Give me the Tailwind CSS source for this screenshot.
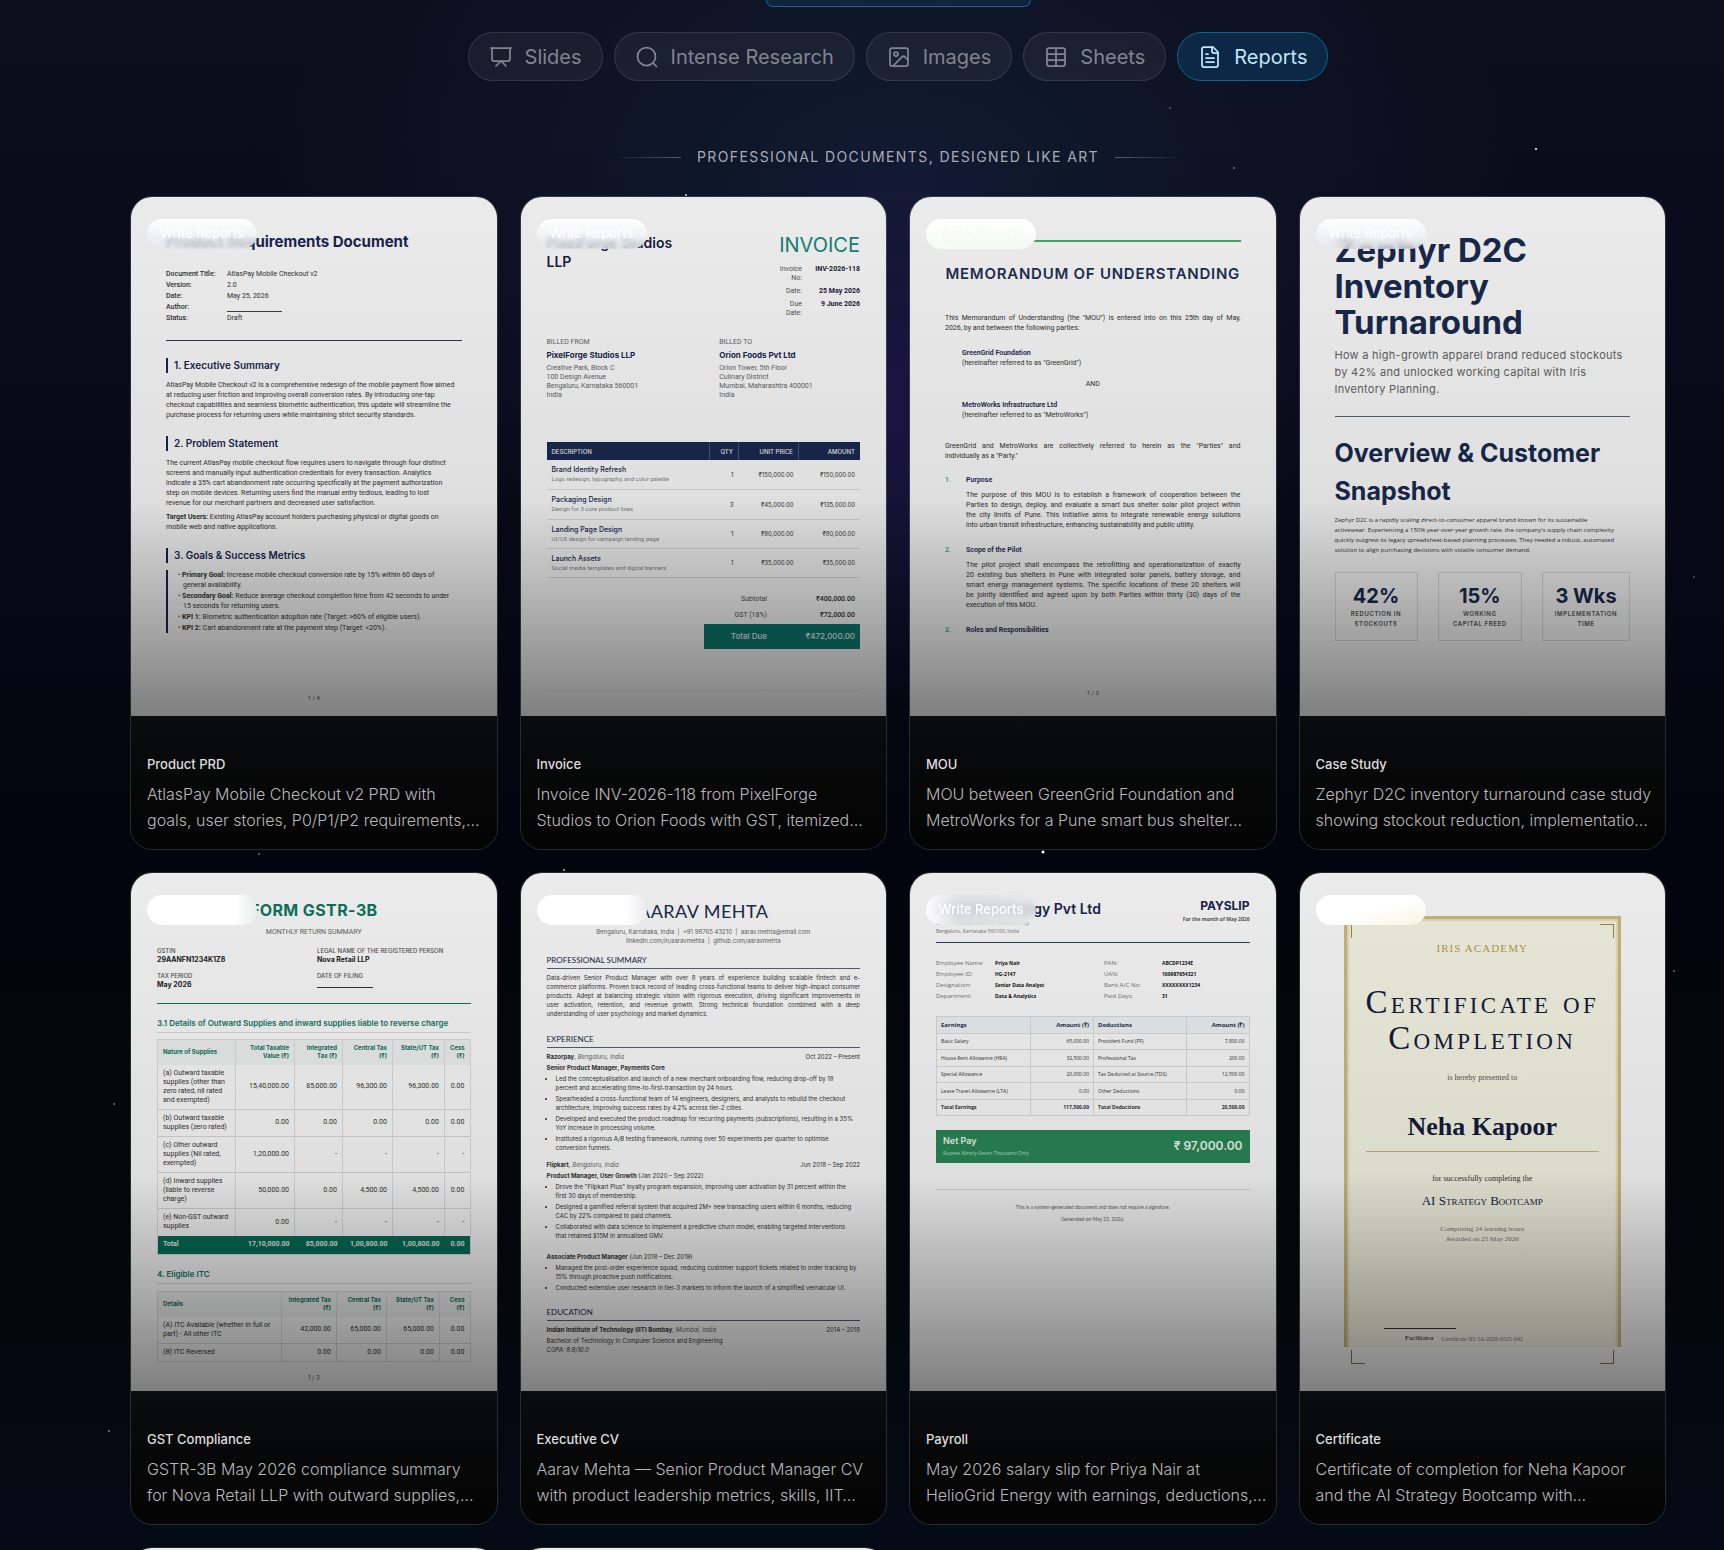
<!DOCTYPE html>
<html lang="en">
<head>
    <meta charset="UTF-8">
    <meta name="viewport" content="width=device-width, initial-scale=1.0">
    <title>Reports</title>
    <script src="https://cdn.jsdelivr.net/npm/@tailwindcss/browser@4"></script>
</head>
<body class="bg-[#04060d] font-['Inter',sans-serif] text-white">
<div class="relative h-screen overflow-y-auto overflow-x-hidden pl-[72px] [scrollbar-width:none] bg-[radial-gradient(ellipse_200px_300px_at_52%_26%,#1c1440_0%,transparent_100%),radial-gradient(ellipse_620px_420px_at_52%_12%,#101b30_0%,transparent_100%),linear-gradient(180deg,#0d0e1d_0%,#0a0b1a_22%,#03050e_52%,#03060c_80%,#050b15_100%)]">

    <!-- Estrellas -->
    <svg class="pointer-events-none absolute inset-0 h-full w-full" fill="#fff" aria-hidden="true">
        <circle cx="1536" cy="149" r="1" />
        <circle cx="1170" cy="108" r="1" opacity=".3" />
        <circle cx="1234" cy="168" r="1" opacity=".4" />
        <circle cx="686" cy="195" r="1" opacity=".8" />
        <circle cx="1043" cy="852" r="1.5" />
        <circle cx="259" cy="854" r="1" opacity=".4" />
        <circle cx="564" cy="870" r="1" opacity=".7" />
        <circle cx="1694" cy="577" r="1" opacity=".3" />
        <circle cx="1674" cy="971" r="1" opacity=".4" />
        <circle cx="114" cy="1104" r="1" opacity=".4" />
        <circle cx="109" cy="1431" r="1" opacity=".5" />
    </svg>

    <header class="relative flex flex-col items-center">
        <div class="h-[7px] w-[265px] rounded-b-2xl border border-t-0 border-[#0d6a94] bg-[#10243f]"></div>

        <nav class="mt-[25px] flex gap-[11px] text-[20px] text-[#82848f]">
            <button class="flex h-[49px] items-center gap-3 rounded-full border border-white/10 bg-white/5 px-5">
                <svg class="size-6" viewBox="0 0 24 24" fill="none" stroke="currentColor" stroke-width="1.75" stroke-linecap="round" stroke-linejoin="round"><path d="M2 3h20"/><path d="M21 3v11a2 2 0 0 1-2 2H5a2 2 0 0 1-2-2V3"/><path d="m7 21 5-5 5 5"/></svg>
                Slides
            </button>
            <button class="flex h-[49px] items-center gap-3 rounded-full border border-white/10 bg-white/5 px-5">
                <svg class="size-6" viewBox="0 0 24 24" fill="none" stroke="currentColor" stroke-width="1.75" stroke-linecap="round" stroke-linejoin="round"><circle cx="11.5" cy="11.5" r="9"/><path d="m21.5 21.5-3.6-3.6"/></svg>
                Intense Research
            </button>
            <button class="flex h-[49px] items-center gap-3 rounded-full border border-white/10 bg-white/5 px-5">
                <svg class="size-6" viewBox="0 0 24 24" fill="none" stroke="currentColor" stroke-width="1.75" stroke-linecap="round" stroke-linejoin="round"><rect width="18" height="18" x="3" y="3" rx="2"/><circle cx="9" cy="9" r="2"/><path d="m21 15-3.086-3.086a2 2 0 0 0-2.828 0L6 21"/></svg>
                Images
            </button>
            <button class="flex h-[49px] items-center gap-3 rounded-full border border-white/10 bg-white/5 px-5">
                <svg class="size-6" viewBox="0 0 24 24" fill="none" stroke="currentColor" stroke-width="1.75" stroke-linecap="round" stroke-linejoin="round"><rect width="18" height="18" x="3" y="3" rx="2"/><path d="M12 3v18"/><path d="M3 9h18"/><path d="M3 15h18"/></svg>
                Sheets
            </button>
            <button class="flex h-[49px] items-center gap-3 rounded-full border border-[#0b6590] bg-[#0d2844] px-5 text-[#bfe6fb]">
                <svg class="size-6" viewBox="0 0 24 24" fill="none" stroke="currentColor" stroke-width="1.75" stroke-linecap="round" stroke-linejoin="round"><path d="M15 2H6a2 2 0 0 0-2 2v16a2 2 0 0 0 2 2h12a2 2 0 0 0 2-2V7Z"/><path d="M14 2v4a2 2 0 0 0 2 2h4"/><path d="M10 9H8"/><path d="M16 13H8"/><path d="M16 17H8"/></svg>
                Reports
            </button>
        </nav>

        <div class="mt-[66px] flex items-center gap-4">
            <span class="h-px w-[70px] bg-linear-to-l from-white/30 to-transparent"></span>
            <h2 class="text-[14px] leading-5 tracking-widest text-[#a9acb6]">PROFESSIONAL DOCUMENTS, DESIGNED LIKE ART</h2>
            <span class="h-px w-[70px] bg-linear-to-r from-white/30 to-transparent"></span>
        </div>
    </header>

    <main class="relative mx-auto mt-[29px] grid max-w-[1536px] grid-cols-4 gap-[22px]">

        <!-- PRD -->
        <article class="overflow-hidden rounded-[22px] border border-white/15">
            <div class="relative aspect-[365/518] overflow-hidden bg-white text-[#333]">
                <div class="flex h-full flex-col px-[35px] pt-[35px] pb-[13px] font-['Roboto',sans-serif] text-[7px] leading-[10px] whitespace-nowrap">
                    <h3 class="font-['Inter',sans-serif] text-[15px] leading-5 font-bold text-[#1b2550]">Product Requirements Document</h3>
                    <dl class="mt-[17px] grid grid-cols-[61px_1fr] leading-[11px]">
                        <dt class="font-medium">Document Title:</dt><dd>AtlasPay Mobile Checkout v2</dd>
                        <dt class="font-medium">Version:</dt><dd>2.0</dd>
                        <dt class="font-medium">Date:</dt><dd>May 25, 2026</dd>
                        <dt class="font-medium">Author:</dt><dd class="flex items-end"><span class="mb-px w-[55px] border-b border-[#444]"></span></dd>
                        <dt class="font-medium">Status:</dt><dd>Draft</dd>
                    </dl>
                    <hr class="mt-4 border-[#33364d]">
                    <h4 class="mt-[17px] border-l-2 border-[#1b2550] pl-1.5 font-['Inter',sans-serif] text-[10px] leading-[15px] font-semibold text-[#1b2550]">1. Executive Summary</h4>
                    <p class="mt-[7px]">AtlasPay Mobile Checkout v2 is a comprehensive redesign of the mobile payment flow aimed<br>at reducing user friction and improving overall conversion rates. By introducing one-tap<br>checkout capabilities and seamless biometric authentication, this update will streamline the<br>purchase process for returning users while maintaining strict security standards.</p>
                    <h4 class="mt-4 border-l-2 border-[#1b2550] pl-1.5 font-['Inter',sans-serif] text-[10px] leading-[15px] font-semibold text-[#1b2550]">2. Problem Statement</h4>
                    <p class="mt-[7px]">The current AtlasPay mobile checkout flow requires users to navigate through four distinct<br>screens and manually input authentication credentials for every transaction. Analytics<br>indicate a 35% cart abandonment rate occurring specifically at the payment authorization<br>step on mobile devices. Returning users find the manual entry tedious, leading to lost<br>revenue for our merchant partners and decreased user satisfaction.</p>
                    <p class="mt-1"><b>Target Users:</b> Existing AtlasPay account holders purchasing physical or digital goods on<br>mobile web and native applications.</p>
                    <h4 class="mt-4 border-l-2 border-[#1b2550] pl-1.5 font-['Inter',sans-serif] text-[10px] leading-[15px] font-semibold text-[#1b2550]">3. Goals &amp; Success Metrics</h4>
                    <ul class="mt-[7px] flex flex-col gap-px border-l-2 border-[#1b2550] pl-[15px]">
                        <li class="-indent-[5px]">• <b>Primary Goal:</b> Increase mobile checkout conversion rate by 15% within 60 days of<br>general availability.</li>
                        <li class="-indent-[5px]">• <b>Secondary Goal:</b> Reduce average checkout completion time from 42 seconds to under<br>15 seconds for returning users.</li>
                        <li class="-indent-[5px]">• <b>KPI 1:</b> Biometric authentication adoption rate (Target: &gt;60% of eligible users).</li>
                        <li class="-indent-[5px]">• <b>KPI 2:</b> Cart abandonment rate at the payment step (Target: &lt;20%).</li>
                    </ul>
                    <p class="mt-auto text-center text-[6px] text-[#555]">1 / 4</p>
                </div>
                <div class="absolute inset-0 bg-[linear-gradient(180deg,#00000014_0%,#00000020_58%,#00000080_100%)]"></div>
                <span class="absolute top-[22px] left-4 flex h-[30px] w-[110px] items-center justify-center rounded-full bg-linear-to-b from-white to-[#e4e6ec]/70 text-[13px] text-white backdrop-blur-[2px]">Write Reports</span>
            </div>
            <div class="bg-linear-to-b from-[#0b0c0e] to-[#040404] px-4 pt-[38px] pb-4">
                <h3 class="text-[13px] leading-5 font-medium text-[#dededf]">Product PRD</h3>
                <p class="mt-[7px] text-[16px] leading-[26px] font-light whitespace-nowrap text-[#b9b9ba]">AtlasPay Mobile Checkout v2 PRD with<br>goals, user stories, P0/P1/P2 requirements,…</p>
            </div>
        </article>

        <!-- Invoice -->
        <article class="overflow-hidden rounded-[22px] border border-white/15">
            <div class="relative aspect-[365/518] overflow-hidden bg-white text-[#333]">
                <div class="flex h-full flex-col px-[26px] pt-9 text-[6px] leading-[9px] whitespace-nowrap">
                    <div class="flex justify-between">
                        <h3 class="text-[14px] leading-[19px] font-semibold text-[#1a2140]">PixelForge Studios<br>LLP</h3>
                        <div class="flex flex-col items-end">
                            <p class="text-[20px] leading-6 text-[#16897a]">INVOICE</p>
                            <dl class="mt-2 grid grid-cols-[auto_58px] gap-y-1 text-right font-['Roboto',sans-serif] text-[7px]">
                                <dt class="text-[#555]">Invoice<br>No:</dt><dd class="font-bold text-[#1a2140]">INV-2026-118</dd>
                                <dt class="text-[#555]">Date:</dt><dd class="font-bold text-[#1a2140]">25 May 2026</dd>
                                <dt class="text-[#555]">Due<br>Date:</dt><dd class="font-bold text-[#1a2140]">9 June 2026</dd>
                            </dl>
                        </div>
                    </div>
                    <div class="mt-5 grid grid-cols-2 gap-8 font-['Roboto',sans-serif] text-[7px] text-[#666]">
                        <div>
                            <p>BILLED FROM</p>
                            <p class="my-1 font-['Inter',sans-serif] text-[8px] font-bold text-[#1b2550]">PixelForge Studios LLP</p>
                            <p>Creative Park, Block C<br>100 Design Avenue<br>Bengaluru, Karnataka 560001<br>India</p>
                        </div>
                        <div>
                            <p>BILLED TO</p>
                            <p class="my-1 font-['Inter',sans-serif] text-[8px] font-bold text-[#1b2550]">Orion Foods Pvt Ltd</p>
                            <p>Orion Tower, 5th Floor<br>Culinary District<br>Mumbai, Maharashtra 400001<br>India</p>
                        </div>
                    </div>
                    <table class="mt-[42px] w-full table-fixed text-right">
                        <colgroup><col class="w-[163px]"><col class="w-[29px]"><col class="w-[60px]"><col></colgroup>
                        <thead class="bg-[#1a2b52] text-[#f2f2f2]">
                            <tr class="h-[18px]"><th class="px-[5px] text-left font-medium">DESCRIPTION</th><th class="border-x border-[#48567a] px-[5px] font-medium">QTY</th><th class="border-r border-[#48567a] px-[5px] font-medium">UNIT PRICE</th><th class="px-[5px] font-medium">AMOUNT</th></tr>
                        </thead>
                        <tbody>
                            <tr class="h-[29px] border-b border-[#e2e2e2]"><td class="px-[5px] text-left"><p class="text-[7px] font-medium text-[#1b2550]">Brand Identity Refresh</p><p class="font-['Roboto',sans-serif] text-[#888]">Logo redesign, typography, and color palette</p></td><td class="px-[5px]">1</td><td class="px-[5px]">₹150,000.00</td><td class="px-[5px]">₹150,000.00</td></tr>
                            <tr class="h-[30px] border-b border-[#e2e2e2]"><td class="px-[5px] text-left"><p class="text-[7px] font-medium text-[#1b2550]">Packaging Design</p><p class="font-['Roboto',sans-serif] text-[#888]">Design for 3 core product lines</p></td><td class="px-[5px]">3</td><td class="px-[5px]">₹45,000.00</td><td class="px-[5px]">₹135,000.00</td></tr>
                            <tr class="h-[29px] border-b border-[#e2e2e2]"><td class="px-[5px] text-left"><p class="text-[7px] font-medium text-[#1b2550]">Landing Page Design</p><p class="font-['Roboto',sans-serif] text-[#888]">UI/UX design for campaign landing page</p></td><td class="px-[5px]">1</td><td class="px-[5px]">₹80,000.00</td><td class="px-[5px]">₹80,000.00</td></tr>
                            <tr class="h-[29px] border-b border-[#e2e2e2]"><td class="px-[5px] text-left"><p class="text-[7px] font-medium text-[#1b2550]">Launch Assets</p><p class="font-['Roboto',sans-serif] text-[#888]">Social media templates and digital banners</p></td><td class="px-[5px]">1</td><td class="px-[5px]">₹35,000.00</td><td class="px-[5px]">₹35,000.00</td></tr>
                        </tbody>
                    </table>
                    <table class="mt-[14px] ml-auto w-[156px] text-right font-['Roboto',sans-serif] text-[7px]">
                        <tbody>
                            <tr class="h-4"><td class="w-[63px] text-[#555]">Subtotal</td><td class="pr-[5px] font-medium">₹400,000.00</td></tr>
                            <tr class="h-4"><td class="text-[#555]">GST (18%)</td><td class="pr-[5px] font-medium">₹72,000.00</td></tr>
                            <tr class="h-[25px] bg-[#0d7c71] font-['Inter',sans-serif] text-[8px] font-medium text-[#e8f4f2]"><td>Total Due</td><td class="pr-[5px]">₹472,000.00</td></tr>
                        </tbody>
                    </table>
                    <hr class="mt-[41px] border-[#efefef]">
                </div>
                <div class="absolute inset-0 bg-[linear-gradient(180deg,#00000014_0%,#00000020_58%,#00000080_100%)]"></div>
                <span class="absolute top-[22px] left-4 flex h-[30px] w-[110px] items-center justify-center rounded-full bg-linear-to-b from-white to-[#e4e6ec]/70 text-[13px] text-white backdrop-blur-[2px]">Write Reports</span>
            </div>
            <div class="bg-linear-to-b from-[#0b0c0e] to-[#040404] px-4 pt-[38px] pb-4">
                <h3 class="text-[13px] leading-5 font-medium text-[#dededf]">Invoice</h3>
                <p class="mt-[7px] text-[16px] leading-[26px] font-light whitespace-nowrap text-[#b9b9ba]">Invoice INV-2026-118 from PixelForge<br>Studios to Orion Foods with GST, itemized…</p>
            </div>
        </article>

        <!-- MOU -->
        <article class="overflow-hidden rounded-[22px] border border-white/15">
            <div class="relative aspect-[365/518] overflow-hidden bg-white text-[#333]">
                <div class="flex h-full flex-col px-[35px] pt-[43px] pb-[18px] font-['Roboto',sans-serif] text-[7px] leading-[10px] whitespace-nowrap">
                    <hr class="border-t-2 border-[#4caf6a]">
                    <h3 class="mt-[22px] text-center font-['Inter',sans-serif] text-[15px] leading-5 font-semibold tracking-wider text-[#1f3055]">MEMORANDUM OF UNDERSTANDING</h3>
                    <p class="mt-[29px] [text-align-last:justify]">This Memorandum of Understanding (the "MOU") is entered into on this 25th day of May,</p>
                    <p>2026, by and between the following parties:</p>
                    <div class="mt-[15px] pl-[17px]">
                        <p class="font-semibold text-[#1b2550]">GreenGrid Foundation</p>
                        <p>(hereinafter referred to as "GreenGrid")</p>
                    </div>
                    <p class="my-[11px] text-center">AND</p>
                    <div class="pl-[17px]">
                        <p class="font-semibold text-[#1b2550]">MetroWorks Infrastructure Ltd</p>
                        <p>(hereinafter referred to as "MetroWorks")</p>
                    </div>
                    <p class="mt-[21px] [text-align-last:justify]">GreenGrid and MetroWorks are collectively referred to herein as the "Parties" and</p>
                    <p>individually as a "Party."</p>
                    <div class="mt-[14px] grid grid-cols-[21px_1fr] gap-y-[5px]">
                        <span class="font-semibold text-[#4caf6a]">1.</span><h4 class="font-semibold text-[#1b2550]">Purpose</h4>
                        <div class="col-start-2">
                            <p class="[text-align-last:justify]">The purpose of this MOU is to establish a framework of cooperation between the<br>Parties to design, deploy, and evaluate a smart bus shelter solar pilot project within<br>the city limits of Pune. This initiative aims to integrate renewable energy solutions</p>
                            <p>into urban transit infrastructure, enhancing sustainability and public utility.</p>
                        </div>
                    </div>
                    <div class="mt-[15px] grid grid-cols-[21px_1fr] gap-y-[5px]">
                        <span class="font-semibold text-[#4caf6a]">2.</span><h4 class="font-semibold text-[#1b2550]">Scope of the Pilot</h4>
                        <div class="col-start-2">
                            <p class="[text-align-last:justify]">The pilot project shall encompass the retrofitting and operationalization of exactly<br>20 existing bus shelters in Pune with integrated solar panels, battery storage, and<br>smart energy management systems. The specific locations of these 20 shelters will<br>be jointly identified and agreed upon by both Parties within thirty (30) days of the</p>
                            <p>execution of this MOU.</p>
                        </div>
                    </div>
                    <div class="mt-[15px] grid grid-cols-[21px_1fr]">
                        <span class="font-semibold text-[#4caf6a]">3.</span><h4 class="font-semibold text-[#1b2550]">Roles and Responsibilities</h4>
                    </div>
                    <p class="mt-auto text-center text-[6px] text-[#555]">1 / 3</p>
                </div>
                <div class="absolute inset-0 bg-[linear-gradient(180deg,#00000014_0%,#00000020_58%,#00000080_100%)]"></div>
                <span class="absolute top-[22px] left-4 flex h-[30px] w-[110px] items-center justify-center rounded-full bg-linear-to-b from-white to-[#f8fbf8]/90 text-[13px] text-[#f4f8f3] backdrop-blur-[2px]">Write Reports</span>
            </div>
            <div class="bg-linear-to-b from-[#0b0c0e] to-[#040404] px-4 pt-[38px] pb-4">
                <h3 class="text-[13px] leading-5 font-medium text-[#dededf]">MOU</h3>
                <p class="mt-[7px] text-[16px] leading-[26px] font-light whitespace-nowrap text-[#b9b9ba]">MOU between GreenGrid Foundation and<br>MetroWorks for a Pune smart bus shelter…</p>
            </div>
        </article>

        <!-- Case study -->
        <article class="overflow-hidden rounded-[22px] border border-white/15">
            <div class="relative aspect-[365/518] overflow-hidden bg-white text-[#333]">
                <div class="flex h-full flex-col px-[35px] pt-[35px] whitespace-nowrap">
                    <h3 class="text-[33px] leading-9 font-bold text-[#1a2b4e]">Zephyr D2C<br>Inventory<br>Turnaround</h3>
                    <p class="mt-[7px] text-[11px] leading-[17px] tracking-wide text-[#666]">How a high-growth apparel brand reduced stockouts<br>by 42% and unlocked working capital with Iris<br>Inventory Planning.</p>
                    <hr class="mt-[18px] border-[#5b6675]">
                    <h4 class="mt-[17px] text-[25px] leading-[38px] font-bold text-[#1a2b4e]">Overview &amp; Customer<br>Snapshot</h4>
                    <p class="mt-[5px] font-['Open_Sans',sans-serif] text-[6px] leading-[10px]">Zephyr D2C is a rapidly scaling direct-to-consumer apparel brand known for its sustainable<br>activewear. Experiencing a 150% year-over-year growth rate, the company's supply chain complexity<br>quickly outgrew its legacy spreadsheet-based planning processes. They needed a robust, automated<br>solution to align purchasing decisions with volatile consumer demand.</p>
                    <div class="mt-[17px] grid grid-cols-[83px_84px_88px] justify-between text-center text-[6px] leading-[10px] font-semibold tracking-widest text-[#555]">
                        <div class="h-[69px] border border-[#dfe1e3] pt-[10px]"><p class="text-[20px] leading-[26px] font-bold tracking-normal text-[#1a2b4e]">42%</p><p>REDUCTION IN<br>STOCKOUTS</p></div>
                        <div class="h-[69px] border border-[#dfe1e3] pt-[10px]"><p class="text-[20px] leading-[26px] font-bold tracking-normal text-[#1a2b4e]">15%</p><p>WORKING<br>CAPITAL FREED</p></div>
                        <div class="h-[69px] border border-[#dfe1e3] pt-[10px]"><p class="text-[20px] leading-[26px] font-bold tracking-normal text-[#1a2b4e]">3 Wks</p><p>IMPLEMENTATION<br>TIME</p></div>
                    </div>
                </div>
                <div class="absolute inset-0 bg-[linear-gradient(180deg,#00000014_0%,#00000020_58%,#00000080_100%)]"></div>
                <span class="absolute top-[22px] left-4 flex h-[30px] w-[110px] items-center justify-center rounded-full bg-linear-to-b from-white to-[#e4e6ec]/70 text-[13px] text-white backdrop-blur-xs">Write Reports</span>
            </div>
            <div class="bg-linear-to-b from-[#0b0c0e] to-[#040404] px-4 pt-[38px] pb-4">
                <h3 class="text-[13px] leading-5 font-medium text-[#dededf]">Case Study</h3>
                <p class="mt-[7px] text-[16px] leading-[26px] font-light whitespace-nowrap text-[#b9b9ba]">Zephyr D2C inventory turnaround case study<br>showing stockout reduction, implementatio…</p>
            </div>
        </article>

        <!-- GST -->
        <article class="overflow-hidden rounded-[22px] border border-white/15">
            <div class="relative aspect-[365/518] overflow-hidden bg-white text-[#333]">
                <div class="flex h-full flex-col px-[26px] pt-[27px] pb-[9px] text-[6px] leading-[9px] whitespace-nowrap">
                    <h3 class="text-center text-[16px] leading-5 font-bold tracking-wide text-[#10785f]">FORM GSTR-3B</h3>
                    <p class="mt-2 text-center font-['Roboto',sans-serif] text-[7px] text-[#666]">MONTHLY RETURN SUMMARY</p>
                    <div class="mt-[9px] grid grid-cols-[160px_1fr] gap-y-[7px] font-medium text-[#555]">
                        <div><p>GSTIN</p><p class="text-[7px] font-bold text-[#222]">29AANFN1234K1Z8</p></div>
                        <div><p>LEGAL NAME OF THE REGISTERED PERSON</p><p class="text-[7px] font-bold text-[#222]">Nova Retail LLP</p></div>
                        <div><p>TAX PERIOD</p><p class="text-[7px] font-bold text-[#222]">May 2026</p></div>
                        <div><p>DATE OF FILING</p><p class="mt-[7px] w-14 border-t border-[#333]"></p></div>
                    </div>
                    <hr class="mt-[14px] border-[#10785f]">
                    <h4 class="mt-[14px] border-b border-[#ddd] pb-[3px] text-[8px] leading-[11px] font-semibold text-[#10785f]">3.1 Details of Outward Supplies and inward supplies liable to reverse charge</h4>
                    <table class="mt-[6px] w-full table-fixed border border-[#e0e0e0] text-right [&_td]:border-x [&_td]:border-[#e2e2e2] [&_td]:px-[5px] [&_th]:border-x [&_th]:border-[#e2e2e2] [&_th]:px-[5px]">
                        <colgroup><col class="w-[78px]"><col class="w-[59px]"><col class="w-[48px]"><col class="w-[50px]"><col class="w-[52px]"><col></colgroup>
                        <thead class="bg-[#f4f5f5] leading-[8px] font-semibold text-[#10785f]">
                            <tr class="h-[26px]"><th class="text-left">Nature of Supplies</th><th>Total Taxable<br>Value (₹)</th><th>Integrated<br>Tax (₹)</th><th>Central Tax<br>(₹)</th><th>State/UT Tax<br>(₹)</th><th>Cess<br>(₹)</th></tr>
                        </thead>
                        <tbody class="font-['Roboto',sans-serif] text-[7px]">
                            <tr class="h-[44px] border-b border-[#dcdcdc]"><td class="text-left">(a) Outward taxable<br>supplies (other than<br>zero rated, nil rated<br>and exempted)</td><td>15,40,000.00</td><td>85,000.00</td><td>96,300.00</td><td>96,300.00</td><td>0.00</td></tr>
                            <tr class="h-[27px] border-b border-[#dcdcdc]"><td class="text-left">(b) Outward taxable<br>supplies (zero rated)</td><td>0.00</td><td>0.00</td><td>0.00</td><td>0.00</td><td>0.00</td></tr>
                            <tr class="h-[36px] border-b border-[#dcdcdc]"><td class="text-left">(c) Other outward<br>supplies (Nil rated,<br>exempted)</td><td>1,20,000.00</td><td>-</td><td>-</td><td>-</td><td>-</td></tr>
                            <tr class="h-[36px] border-b border-[#dcdcdc]"><td class="text-left">(d) Inward supplies<br>(liable to reverse<br>charge)</td><td>50,000.00</td><td>0.00</td><td>4,500.00</td><td>4,500.00</td><td>0.00</td></tr>
                            <tr class="h-[28px]"><td class="text-left">(e) Non-GST outward<br>supplies</td><td>0.00</td><td>-</td><td>-</td><td>-</td><td>-</td></tr>
                        </tbody>
                        <tfoot class="bg-[#08705a] font-['Roboto',sans-serif] text-[7px] font-bold text-[#e6f3ef] [&_td]:border-none">
                            <tr class="h-[18px]"><td class="text-left">Total</td><td>17,10,000.00</td><td>85,000.00</td><td>1,00,800.00</td><td>1,00,800.00</td><td>0.00</td></tr>
                        </tfoot>
                    </table>
                    <h4 class="mt-[14px] border-b border-[#ddd] pb-[3px] text-[8px] leading-[11px] font-semibold text-[#10785f]">4. Eligible ITC</h4>
                    <table class="mt-[7px] w-full table-fixed border border-[#e0e0e0] text-right [&_td]:border-x [&_td]:border-[#e2e2e2] [&_td]:px-[5px] [&_th]:border-x [&_th]:border-[#e2e2e2] [&_th]:px-[5px]">
                        <colgroup><col class="w-[124px]"><col class="w-[55px]"><col class="w-[50px]"><col class="w-[53px]"><col></colgroup>
                        <thead class="bg-[#f4f5f5] leading-[8px] font-semibold text-[#10785f]">
                            <tr class="h-[26px]"><th class="text-left">Details</th><th>Integrated Tax<br>(₹)</th><th>Central Tax<br>(₹)</th><th>State/UT Tax<br>(₹)</th><th>Cess<br>(₹)</th></tr>
                        </thead>
                        <tbody class="font-['Roboto',sans-serif] text-[7px]">
                            <tr class="h-[26px] border-b border-[#dcdcdc]"><td class="text-left">(A) ITC Available (whether in full or<br>part) - All other ITC</td><td>42,000.00</td><td>65,000.00</td><td>65,000.00</td><td>0.00</td></tr>
                            <tr class="h-[18px]"><td class="text-left">(B) ITC Reversed</td><td>0.00</td><td>0.00</td><td>0.00</td><td>0.00</td></tr>
                        </tbody>
                    </table>
                    <p class="mt-auto text-center text-[#555]">1 / 3</p>
                </div>
                <div class="absolute inset-0 bg-[linear-gradient(180deg,#00000014_0%,#00000020_58%,#00000080_100%)]"></div>
                <span class="absolute top-[22px] left-4 h-[30px] w-[110px] rounded-full bg-linear-to-r from-white from-80% to-[#e8edec]"></span>
            </div>
            <div class="bg-linear-to-b from-[#0b0c0e] to-[#040404] px-4 pt-[38px] pb-4">
                <h3 class="text-[13px] leading-5 font-medium text-[#dededf]">GST Compliance</h3>
                <p class="mt-[7px] text-[16px] leading-[26px] font-light whitespace-nowrap text-[#b9b9ba]">GSTR-3B May 2026 compliance summary<br>for Nova Retail LLP with outward supplies,…</p>
            </div>
        </article>

        <!-- CV -->
        <article class="overflow-hidden rounded-[22px] border border-white/15">
            <div class="relative aspect-[365/518] overflow-hidden bg-white text-[#333]">
                <div class="flex h-full flex-col px-[26px] pt-[26px] text-[6px] leading-[9px] whitespace-nowrap">
                    <h3 class="text-center font-['Lato',sans-serif] text-[18px] leading-6 tracking-wide text-[#232a4d]">AARAV MEHTA</h3>
                    <p class="mt-1 text-center text-[#666]">Bengaluru, Karnataka, India &nbsp;|&nbsp; +91 98765 43210 &nbsp;|&nbsp; aarav.mehta@email.com<br>linkedin.com/in/aaravmehta &nbsp;|&nbsp; github.com/aaravmehta</p>
                    <h4 class="mt-[10px] border-b border-[#5b6078] pb-[2px] font-['Lato',sans-serif] text-[8px] leading-[11px] text-[#232a4d]">PROFESSIONAL SUMMARY</h4>
                    <p class="mt-1 [text-align-last:justify]">Data-driven Senior Product Manager with over 8 years of experience building scalable fintech and e-<br>commerce platforms. Proven track record of leading cross-functional teams to deliver high-impact consumer<br>products. Adept at balancing strategic vision with rigorous execution, driving significant improvements in<br>user activation, retention, and revenue growth. Strong technical foundation combined with a deep</p>
                    <p>understanding of user psychology and market dynamics.</p>
                    <h4 class="mt-4 border-b border-[#5b6078] pb-[2px] font-['Lato',sans-serif] text-[8px] leading-[11px] text-[#232a4d]">EXPERIENCE</h4>
                    <p class="mt-1 flex justify-between"><span><b>Razorpay</b>, <i class="text-[#666]">Bengaluru, India</i></span><span>Oct 2022 – Present</span></p>
                    <p class="mt-[2px] font-bold">Senior Product Manager, Payments Core</p>
                    <ul class="mt-[2px] flex list-disc flex-col gap-[2px] pl-[9px]">
                        <li>Led the conceptualisation and launch of a new merchant onboarding flow, reducing drop-off by 18<br>percent and accelerating time-to-first-transaction by 24 hours.</li>
                        <li>Spearheaded a cross-functional team of 14 engineers, designers, and analysts to rebuild the checkout<br>architecture, improving success rates by 4.2% across tier-2 cities.</li>
                        <li>Developed and executed the product roadmap for recurring payments (subscriptions), resulting in a 35%<br>YoY increase in processing volume.</li>
                        <li>Instituted a rigorous A/B testing framework, running over 50 experiments per quarter to optimise<br>conversion funnels.</li>
                    </ul>
                    <p class="mt-2 flex justify-between"><span><b>Flipkart</b>, <i class="text-[#666]">Bengaluru, India</i></span><span>Jun 2018 – Sep 2022</span></p>
                    <p class="mt-[2px]"><b>Product Manager, User Growth</b> (Jan 2020 – Sep 2022)</p>
                    <ul class="mt-[2px] flex list-disc flex-col gap-[2px] pl-[9px]">
                        <li>Drove the "Flipkart Plus" loyalty program expansion, improving user activation by 31 percent within the<br>first 30 days of membership.</li>
                        <li>Designed a gamified referral system that acquired 2M+ new transacting users within 6 months, reducing<br>CAC by 22% compared to paid channels.</li>
                        <li>Collaborated with data science to implement a predictive churn model, enabling targeted interventions<br>that retained $15M in annualised GMV.</li>
                    </ul>
                    <p class="mt-3"><b>Associate Product Manager</b> (Jun 2018 – Dec 2019)</p>
                    <ul class="mt-[2px] flex list-disc flex-col gap-[2px] pl-[9px]">
                        <li>Managed the post-order experience squad, reducing customer support tickets related to order tracking by<br>15% through proactive push notifications.</li>
                        <li>Conducted extensive user research in tier-3 markets to inform the launch of a simplified vernacular UI.</li>
                    </ul>
                    <h4 class="mt-[15px] border-b border-[#5b6078] pb-[2px] font-['Lato',sans-serif] text-[8px] leading-[11px] text-[#232a4d]">EDUCATION</h4>
                    <p class="mt-1 flex justify-between"><span><b>Indian Institute of Technology (IIT) Bombay</b>, <i class="text-[#666]">Mumbai, India</i></span><span>2014 – 2018</span></p>
                    <p class="mt-[2px]">Bachelor of Technology in Computer Science and Engineering<br><i>CGPA: 8.9/10.0</i></p>
                </div>
                <div class="absolute inset-0 bg-[linear-gradient(180deg,#00000014_0%,#00000020_58%,#00000080_100%)]"></div>
                <span class="absolute top-[22px] left-4 h-[30px] w-[110px] rounded-full bg-linear-to-r from-white from-80% to-[#ececf0]"></span>
            </div>
            <div class="bg-linear-to-b from-[#0b0c0e] to-[#040404] px-4 pt-[38px] pb-4">
                <h3 class="text-[13px] leading-5 font-medium text-[#dededf]">Executive CV</h3>
                <p class="mt-[7px] text-[16px] leading-[26px] font-light whitespace-nowrap text-[#b9b9ba]">Aarav Mehta — Senior Product Manager CV<br>with product leadership metrics, skills, IIT…</p>
            </div>
        </article>

        <!-- Payroll -->
        <article class="overflow-hidden rounded-[22px] border border-white/15">
            <div class="relative aspect-[365/518] overflow-hidden bg-white text-[#333]">
                <div class="flex h-full flex-col px-[26px] pt-[26px] font-['Open_Sans',sans-serif] text-[5px] leading-[8px] whitespace-nowrap">
                    <div class="flex justify-between border-b border-[#2b4468] pb-[7px]">
                        <div class="text-[#777]">
                            <h3 class="font-['Inter',sans-serif] text-[14px] leading-5 font-semibold text-[#1b2550]">HelioGrid Energy Pvt Ltd</h3>
                            <p>Solar Park Road, Phase 1, Electronic City<br>Bengaluru, Karnataka 560100, India</p>
                        </div>
                        <div class="text-right">
                            <p class="font-['Inter',sans-serif] text-[12px] leading-[14px] font-bold text-[#1b2550]">PAYSLIP</p>
                            <p class="mt-[2px] font-bold text-[#555]">For the month of May 2026</p>
                        </div>
                    </div>
                    <dl class="mt-[15px] grid grid-cols-[59px_109px_58px_1fr] text-[6px] leading-[11px] text-[#777] [&_dd]:text-[5px] [&_dd]:font-bold [&_dd]:text-[#111]">
                        <dt>Employee Name:</dt><dd>Priya Nair</dd><dt>PAN:</dt><dd>ABCDP1234E</dd>
                        <dt>Employee ID:</dt><dd>HG-2147</dd><dt>UAN:</dt><dd>100987654321</dd>
                        <dt>Designation:</dt><dd>Senior Data Analyst</dd><dt>Bank A/C No:</dt><dd>XXXXXXXX1234</dd>
                        <dt>Department:</dt><dd>Data &amp; Analytics</dd><dt>Paid Days:</dt><dd>31</dd>
                    </dl>
                    <table class="mt-[14px] w-full table-fixed border border-[#e0e0e0] text-left [&_td]:border [&_td]:border-[#e0e0e0] [&_td]:px-1 [&_th]:border [&_th]:border-[#e0e0e0] [&_th]:px-1">
                        <colgroup><col class="w-[94px]"><col class="w-[63px]"><col class="w-[93px]"><col></colgroup>
                        <thead class="bg-[#f5f6f7] text-[6px] font-bold text-[#1f3055]">
                            <tr class="h-[17px]"><th>Earnings</th><th class="text-right">Amount (₹)</th><th>Deductions</th><th class="text-right">Amount (₹)</th></tr>
                        </thead>
                        <tbody>
                            <tr class="h-[16px]"><td>Basic Salary</td><td class="text-right">65,000.00</td><td>Provident Fund (PF)</td><td class="text-right">7,800.00</td></tr>
                            <tr class="h-[17px]"><td>House Rent Allowance (HRA)</td><td class="text-right">32,500.00</td><td>Professional Tax</td><td class="text-right">200.00</td></tr>
                            <tr class="h-[16px]"><td>Special Allowance</td><td class="text-right">20,000.00</td><td>Tax Deducted at Source (TDS)</td><td class="text-right">12,500.00</td></tr>
                            <tr class="h-[17px]"><td>Leave Travel Allowance (LTA)</td><td class="text-right">0.00</td><td>Other Deductions</td><td class="text-right">0.00</td></tr>
                            <tr class="h-[16px] font-bold"><td>Total Earnings</td><td class="text-right">117,500.00</td><td>Total Deductions</td><td class="text-right">20,500.00</td></tr>
                        </tbody>
                    </table>
                    <div class="mt-[14px] flex h-[33px] items-center justify-between bg-[#2a8a57] px-[7px] font-['Inter',sans-serif] text-[#f3faf6]">
                        <div><p class="text-[9px] leading-[14px] font-semibold">Net Pay</p><p class="font-['Open_Sans',sans-serif] leading-[10px] text-[#bfe0cf]">Rupees Ninety-Seven Thousand Only</p></div>
                        <p class="text-[12px] font-semibold">₹ 97,000.00</p>
                    </div>
                    <hr class="mt-[26px] border-[#e0e0e0]">
                    <p class="mt-[11px] text-center font-['Lato',sans-serif] leading-[12px] text-[#666]">This is a system-generated document and does not require a signature.<br>Generated on May 25, 2026.</p>
                </div>
                <div class="absolute inset-0 bg-[linear-gradient(180deg,#00000014_0%,#00000020_58%,#00000080_100%)]"></div>
                <span class="absolute top-[22px] left-4 flex h-[30px] w-[110px] items-center justify-center rounded-full bg-linear-to-r from-white/90 via-[#dfe0e6]/80 via-30% to-[#e6e7ea]/70 text-[13px] font-medium text-white backdrop-blur-xs">Write Reports</span>
            </div>
            <div class="bg-linear-to-b from-[#0b0c0e] to-[#040404] px-4 pt-[38px] pb-4">
                <h3 class="text-[13px] leading-5 font-medium text-[#dededf]">Payroll</h3>
                <p class="mt-[7px] text-[16px] leading-[26px] font-light whitespace-nowrap text-[#b9b9ba]">May 2026 salary slip for Priya Nair at<br>HelioGrid Energy with earnings, deductions,…</p>
            </div>
        </article>

        <!-- Certificate -->
        <article class="overflow-hidden rounded-[22px] border border-white/15">
            <div class="relative aspect-[365/518] overflow-hidden bg-white text-[#333]">
                <div class="mx-11 mt-[43px] flex h-[431px] flex-col items-center border-3 border-b-0 border-[#d2bf82] bg-[#fbfbea] pt-[22px] font-['Liberation_Serif',serif] whitespace-nowrap text-[#333] shadow-[inset_2px_2px_2px_#e9dfb8,inset_-2px_0_2px_#e9dfb8]">
                    <p class="text-[11px] leading-[14px] tracking-widest text-[#bda14e]">IRIS ACADEMY</p>
                    <h3 class="mt-[29px] text-center text-[33px] leading-9 tracking-widest text-[#151c3d] [font-variant-caps:small-caps]">Certificate of<br>Completion</h3>
                    <p class="mt-[17px] text-[8px] leading-[10px] text-[#555]">is hereby presented to</p>
                    <p class="mt-[28px] w-[233px] border-b border-[#cdb877] pb-2 text-center text-[26px] leading-8 font-bold text-[#151c3d]">Neha Kapoor</p>
                    <p class="mt-[22px] text-[8px] leading-[10px]">for successfully completing the</p>
                    <p class="mt-[9px] text-[13px] leading-4 text-[#151c3d] [font-variant-caps:small-caps]">AI Strategy Bootcamp</p>
                    <p class="mt-[15px] text-center text-[7px] leading-[10px] text-[#777]">Comprising 24 learning hours<br>Awarded on 25 May 2026</p>
                    <div class="mt-auto mb-1 grid w-full">
                        <p class="col-start-1 row-start-1 ml-[37px] w-[72px] border-t border-[#333] pt-1 text-center text-[7px] leading-[10px] text-[#111]">Facilitator</p>
                        <p class="col-start-1 row-start-1 self-end text-center text-[6px] leading-[8px] text-[#777]">Certificate ID: IA-2026-0525-042</p>
                    </div>
                </div>
                <span class="absolute top-[51px] left-[51px] size-[14px] border-t border-l border-[#a08c4c]"></span>
                <span class="absolute top-[51px] right-[51px] size-[14px] border-t border-r border-[#a08c4c]"></span>
                <span class="absolute bottom-[27px] left-[51px] size-[14px] border-b border-l border-[#8a7a48]"></span>
                <span class="absolute right-[51px] bottom-[27px] size-[14px] border-r border-b border-[#8a7a48]"></span>
                <div class="absolute inset-0 bg-[linear-gradient(180deg,#00000014_0%,#00000020_58%,#00000080_100%)]"></div>
                <span class="absolute top-[22px] left-4 h-[30px] w-[110px] rounded-full bg-linear-to-br from-white from-50% to-[#f6f5e4]"></span>
            </div>
            <div class="bg-linear-to-b from-[#0b0c0e] to-[#040404] px-4 pt-[38px] pb-4">
                <h3 class="text-[13px] leading-5 font-medium text-[#dededf]">Certificate</h3>
                <p class="mt-[7px] text-[16px] leading-[26px] font-light whitespace-nowrap text-[#b9b9ba]">Certificate of completion for Neha Kapoor<br>and the AI Strategy Bootcamp with…</p>
            </div>
        </article>

        <article class="overflow-hidden rounded-[22px] border border-white/15 bg-black">
            <div class="aspect-[365/518] bg-[#ebebeb]"></div>
        </article>
        <article class="overflow-hidden rounded-[22px] border border-white/15 bg-black">
            <div class="aspect-[365/518] bg-[#ebebeb]"></div>
        </article>
    </main>
</div>
</body>
</html>
